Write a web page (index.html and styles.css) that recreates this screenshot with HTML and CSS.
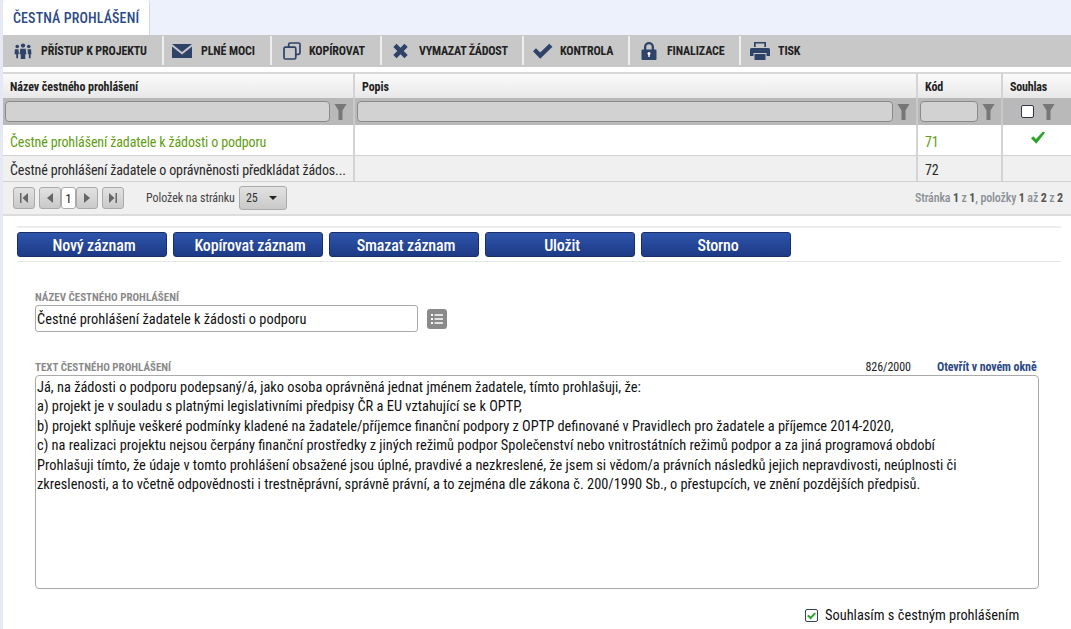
FILE: index.html
```html
<!DOCTYPE html>
<html lang="cs">
<head>
<meta charset="utf-8">
<title>Čestná prohlášení</title>
<link rel="stylesheet" href="styles.css">
</head>
<body>
<div class="page">
  <div class="tabs"><div class="tab">ČESTNÁ PROHLÁŠENÍ</div></div>
  <div class="toolbar">
    <div class="tool w1"><svg class="ico" viewBox="0 0 20 20"><g fill="#2f4368"><circle cx="10" cy="4" r="2.4"/><circle cx="3.6" cy="5" r="2"/><circle cx="16.4" cy="5" r="2"/><path d="M7 7.5h6l.8 6h-1.3V19H7.5v-5.5H6.200z"/><path d="M1 8h4l.4 5.500H4.500V18H2.500v-4.500H.6z"/><path d="M15 8h4l.4 5.500h-.9V18h-2v-4.500h-.9z"/></g></svg><span>PŘÍSTUP K PROJEKTU</span></div>
    <div class="tool w2"><svg class="ico mail" viewBox="0 0 20 14"><path fill="#2f4368" d="M0 0h20L10 8z"/><path fill="#2f4368" d="M0 2.500 10 10.500 20 2.500V14H0z"/></svg><span>PLNÉ MOCI</span></div>
    <div class="tool w3"><svg class="ico" viewBox="0 0 18 18"><rect x="5.700" y="1" width="11.300" height="11.300" rx="1.500" fill="none" stroke="#2f4368" stroke-width="1.700"/><rect x="1" y="5.200" width="11.800" height="11.800" rx="1.500" fill="#c8c8c8" stroke="#2f4368" stroke-width="1.700"/></svg><span>KOPÍROVAT</span></div>
    <div class="tool w4"><svg class="ico" viewBox="0 0 16 16"><path fill="#2f4368" d="M4 .8 8 4.800 12 .8 15.200 4 11.200 8 15.200 12 12 15.200 8 11.200 4 15.200 .8 12 4.800 8 .8 4z"/></svg><span>VYMAZAT ŽÁDOST</span></div>
    <div class="tool w5"><svg class="ico" viewBox="0 0 20 16"><path fill="#2f4368" d="M0 8.200 3 5.200 7.200 9.400 16.200 .8 19.500 3.800 7.200 15.800z"/></svg><span>KONTROLA</span></div>
    <div class="tool w6"><svg class="ico" viewBox="0 0 16 18"><path fill="#2f4368" d="M1.500 7.500H3V5a5 5 0 0 1 10 0v2.500h1.500a1 1 0 0 1 1 1V17a1 1 0 0 1-1 1h-13a1 1 0 0 1-1-1V8.500a1 1 0 0 1 1-1zM5.300 7.500h5.400V5a2.700 2.700 0 0 0-5.400 0z"/><circle cx="8" cy="11.500" r="1.500" fill="#fff"/><rect x="7.300" y="12" width="1.400" height="3" fill="#fff"/></svg><span>FINALIZACE</span></div>
    <div class="tool w7"><svg class="ico" viewBox="0 0 20 18"><path fill="#2f4368" d="M4 0h12v5h-1.700V1.600H5.700V5H4z"/><path fill="#2f4368" d="M1.500 6h17A1.500 1.500 0 0 1 20 7.500V14h-3.500v-3h-13v3H0V7.500A1.500 1.500 0 0 1 1.500 6z"/><rect x="4.500" y="12" width="11" height="6" fill="#2f4368"/></svg><span>TISK</span></div>
  </div>

  <div class="grid">
    <div class="row head">
      <div class="c c1">Název čestného prohlášení</div>
      <div class="c c2">Popis</div>
      <div class="c c3">Kód</div>
      <div class="c c4">Souhlas</div>
    </div>
    <div class="row filter">
      <div class="c c1"><i class="finput"></i><svg class="funnel" viewBox="0 0 12 16"><path d="M0 0h12L8 6.500V16H4V6.500z"/></svg></div>
      <div class="c c2"><i class="finput"></i><svg class="funnel" viewBox="0 0 12 16"><path d="M0 0h12L8 6.500V16H4V6.500z"/></svg></div>
      <div class="c c3"><i class="finput"></i><svg class="funnel" viewBox="0 0 12 16"><path d="M0 0h12L8 6.500V16H4V6.500z"/></svg></div>
      <div class="c c4 center"><i class="fcheck"></i><svg class="funnel" viewBox="0 0 12 16"><path d="M0 0h12L8 6.500V16H4V6.500z"/></svg></div>
    </div>
    <div class="row data sel">
      <div class="c c1">Čestné prohlášení žadatele k žádosti o podporu</div>
      <div class="c c2"></div>
      <div class="c c3">71</div>
      <div class="c c4 center"><svg class="tick" viewBox="0 0 14 13"><path fill="#2aa52a" d="M0 7.200 2.400 5.200 5 8 12 .5 14 1.800 5.300 12.800z"/></svg></div>
    </div>
    <div class="row data alt">
      <div class="c c1">Čestné prohlášení žadatele o oprávněnosti předkládat žádos...</div>
      <div class="c c2"></div>
      <div class="c c3">72</div>
      <div class="c c4"></div>
    </div>
    <div class="pager">
      <div class="pbtns">
        <span class="pb"><svg viewBox="0 0 10 10"><path d="M1 0h1.500v10H1zM9 0v10L3.500 5z"/></svg></span>
        <span class="pb gapl"><svg viewBox="0 0 10 10"><path d="M8 0v10L2 5z"/></svg></span>
        <span class="pnum">1</span>
        <span class="pb"><svg viewBox="0 0 10 10"><path d="M2 0v10l6-5z"/></svg></span>
        <span class="pb gapl"><svg viewBox="0 0 10 10"><path d="M1 0v10l5.500-5zM7.500 0H9v10H7.500z"/></svg></span>
      </div>
      <span class="plabel">Položek na stránku</span>
      <span class="psel">25<svg viewBox="0 0 8 4"><path d="M0 0h8L4 4z"/></svg></span>
      <span class="pinfo">Stránka <b>1</b> z <b>1</b>, položky <b>1</b> až <b>2</b> z <b>2</b></span>
    </div>
  </div>

  <div class="actions">
    <button class="btn">Nový záznam</button>
    <button class="btn">Kopírovat záznam</button>
    <button class="btn">Smazat záznam</button>
    <button class="btn">Uložit</button>
    <button class="btn">Storno</button>
  </div>

  <div class="form">
    <div class="flabel">NÁZEV ČESTNÉHO PROHLÁŠENÍ</div>
    <div class="nameline">
      <div class="input">Čestné prohlášení žadatele k žádosti o podporu</div>
      <span class="listbtn"><svg viewBox="0 0 12 10"><path fill="#fff" d="M0 0h2v2H0zM3.500 .3H12v1.400H3.500zM0 4h2v2H0zM3.500 4.300H12v1.400H3.500zM0 8h2v2H0zM3.500 8.300H12v1.400H3.500z"/></svg></span>
    </div>
    <div class="textline">
      <span class="flabel">TEXT ČESTNÉHO PROHLÁŠENÍ</span>
      <span class="count">826/2000</span>
      <span class="open">Otevřít v novém okně</span>
    </div>
    <div class="area">
      <p>Já, na žádosti o podporu podepsaný/á, jako osoba oprávněná jednat jménem žadatele, tímto prohlašuji, že:</p>
      <p>a) projekt je v souladu s platnými legislativními předpisy ČR a EU vztahující se k OPTP,</p>
      <p>b) projekt splňuje veškeré podmínky kladené na žadatele/příjemce finanční podpory z OPTP definované v Pravidlech pro žadatele a příjemce 2014-2020,</p>
      <p>c) na realizaci projektu nejsou čerpány finanční prostředky z jiných režimů podpor Společenství nebo vnitrostátních režimů podpor a za jiná programová období</p>
      <p>Prohlašuji tímto, že údaje v tomto prohlášení obsažené jsou úplné, pravdivé a nezkreslené, že jsem si vědom/a právních následků jejich nepravdivosti, neúplnosti či</p>
      <p>zkreslenosti, a to včetně odpovědnosti i trestněprávní, správně právní, a to zejména dle zákona č. 200/1990 Sb., o přestupcích, ve znění pozdějších předpisů.</p>
    </div>
    <div class="agree"><span class="cb"><svg viewBox="0 0 10 9"><path fill="#2aa52a" d="M0 4.500 1.800 3 4 5.200 8.300 .5 10 2 4 8.500z"/></svg></span><span>Souhlasím s čestným prohlášením</span></div>
  </div>
</div>
</body>
</html>
```
FILE: styles.css
```css
* { box-sizing: border-box; }
html, body { margin: 0; padding: 0; height: 100%; overflow: hidden; background: #fff; }
body { font-family: Roboto, "Liberation Sans", sans-serif; font-stretch: 75%; font-size: 14px; color: #222; }
.page { width: 1071px; height: 629px; overflow: hidden; border-left: 3px solid #e6e9f4; }

.tabs { height: 35px; background: #ecf1fc; display: flex; }
.tab { width: 147px; height: 35px; background: #fff; color: #2c4a86; font-size: 14px; font-weight: 500; letter-spacing: .12px; padding-top: 11px; line-height: 15px; border-right: 1px solid #d8d8d8; padding-left: 10px; border-radius: 3px 3px 0 0; }

.toolbar { height: 32px; margin-left: -3px; background: #c8c8c8; display: flex; border-bottom: 1px solid #c8c8c8; padding-top: 1px; padding-left: 4px; }
.tool { height: 29px; display: flex; align-items: center; color: #222; font-size: 12px; font-weight: 700; letter-spacing: -.12px; border-right: 2px solid #eeeeee; }
.ico { display: block; flex: none; width: 20px; height: 18px; }
.mail { width: 20px; height: 14px; }
.w1 { width: 160px; padding-left: 9px; gap: 8px; }
.w2 { width: 108px; padding-left: 8px; gap: 9px; }
.w3 { width: 110px; padding-left: 10px; gap: 7px; }
.w4 { width: 142px; padding-left: 10px; gap: 10px; letter-spacing: -.25px; }
.w4 .ico { width: 17px; height: 16px; }
.w5 { width: 106px; padding-left: 9px; gap: 7px; }
.w6 { width: 111px; padding-left: 11px; gap: 10px; }
.w6 .ico { width: 16px; height: 18px; }
.w7 { width: 80px; padding-left: 9px; gap: 8px; border-right: 0; }

.grid { margin-top: 5px; }
.row { display: flex; }
.c { border-right: 2px solid #d4d4d4; padding-left: 7px; display: flex; align-items: center; flex: none; }
.c1 { width: 352px; }
.c2 { width: 563px; }
.c3 { width: 85px; }
.c4 { width: 69px; border-right: 0; }
.head { height: 26px; background: linear-gradient(#fbfbfb, #e8e8e8); border-top: 2px solid #d8d8d8; font-weight: 700; font-size: 12px; letter-spacing: -.05px; color: #222; }
.head .c { padding-top: 1px; }
.head .c4 { letter-spacing: -.2px; }
.filter { height: 27px; background: #b9b9b9; }
.filter .c { border-right: 2px solid #c9c9c9; padding-left: 2px; }
.finput { display: block; height: 21px; flex: 1; min-width: 0; background: #d2d2d2; border: 1px solid #8a8a8a; border-radius: 4px; }
.funnel { display: block; flex: none; width: 13px; height: 16px; margin: 0 6px 0 4px; fill: #777; }
.center { justify-content: center; padding-left: 0; }
.filter .c4 { border-right: 0; padding-left: 6px; }
.fcheck { display: block; width: 13px; height: 13px; background: #fff; border: 1px solid #334; border-radius: 2px; margin-right: 4px; }
.data { height: 31px; font-size: 14px; letter-spacing: -.13px; border-bottom: 1px solid #d0d0d0; }
.data .c { padding-top: 3px; white-space: nowrap; }
.sel { color: #5f9e10; }
.sel .c3 { color: #5f9e10; }
.alt { height: 26px; background: #f0f0f0; color: #2a2a2a; }
.tick { display: block; width: 14px; height: 13px; margin-top: -8px; }

.pager { height: 34px; background: #f0f0f0; border-bottom: 2px solid #dcdcdc; display: flex; align-items: center; padding-left: 10px; padding-right: 8px; font-size: 12px; color: #444; }
.pbtns { display: flex; align-items: center; }
.pb { width: 22px; height: 22px; background: linear-gradient(#e2e2e2, #c9c9c9); border: 1px solid #aaa; border-radius: 3px; display: flex; align-items: center; justify-content: center; }
.gapl { margin-left: 4px; }
.pb svg { width: 10px; height: 10px; fill: #666; }
.pnum { width: 15px; height: 22px; background: #fff; border: 1px solid #aaa; border-radius: 3px; text-align: center; line-height: 21px; font-size: 13px; color: #222; }
.plabel { margin-left: 22px; letter-spacing: -.05px; }
.psel { margin-left: 4px; width: 48px; height: 24px; background: linear-gradient(#e2e2e2, #c9c9c9); border: 1px solid #aaa; border-radius: 3px; display: flex; align-items: center; justify-content: space-between; padding: 0 9px 0 6px; color: #333; }
.psel svg { width: 8px; height: 4px; fill: #222; }
.pinfo { margin-left: auto; color: #8a8f96; font-weight: 500; letter-spacing: -.15px; }
.pinfo b { color: #555; font-weight: 700; }

.actions { margin: 10px 10px 0 14px; height: 36px; border-top: 2px solid #ededed; border-bottom: 1px solid #e6e6e6; display: flex; gap: 6px; padding-top: 4px; }
.btn { width: 150px; height: 25px; background: linear-gradient(#2e55ad, #1d3a85); color: #fff; border: 1px solid #1b2f66; border-radius: 3px; font: inherit; font-stretch: 75%; font-size: 16px; font-weight: 500; letter-spacing: -.15px; padding: 1px 0 0 4px; }

.form { padding: 29px 0 0 32px; }
.flabel { display: block; font-size: 11px; font-weight: 700; color: #8a8a8a; line-height: 13px; }
.nameline { display: flex; align-items: center; margin-top: 1px; }
.input { width: 383px; height: 27px; border: 1px solid #aaa; border-radius: 3px; font-size: 14.400px; line-height: 27px; padding-left: 1px; color: #111; }
.listbtn { width: 20px; height: 20px; margin-left: 9px; background: #8a8a8a; border-radius: 3px; display: flex; align-items: center; justify-content: center; }
.listbtn svg { width: 12px; height: 10px; }
.textline { display: flex; align-items: baseline; width: 1004px; margin-top: 28px; font-size: 12px; }
.count { margin-left: auto; color: #222; letter-spacing: -.05px; }
.open { margin-left: 26px; width: 102px; color: #2c4a86; font-weight: 700; letter-spacing: -.1px; }
.area { width: 1004px; height: 214px; margin-top: 1px; border: 1px solid #aaa; border-radius: 4px; padding: 2px 1px; font-size: 14.400px; line-height: 19.400px; color: #111; }
.area p { margin: 0; white-space: nowrap; }
.agree { display: flex; align-items: center; gap: 7px; margin: 18px 0 0 770px; font-size: 14.400px; color: #111; white-space: nowrap; }
.cb { width: 13px; height: 13px; border: 1px solid #345; border-radius: 2px; display: flex; align-items: center; justify-content: center; background: #fff; }
.cb svg { width: 9px; height: 8px; }
```
